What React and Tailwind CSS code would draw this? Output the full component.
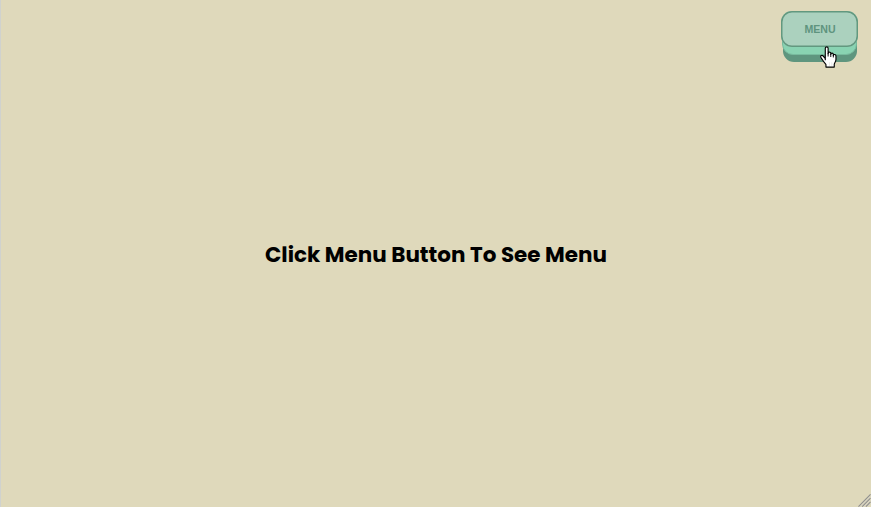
function HandCursor() {
  return (
    <svg
      className="pointer-events-none absolute left-[38.5px] top-[35px] h-[22px] w-[17px]"
      viewBox="0 0 18 23"
      fill="none"
      aria-hidden="true"
    >
      <path
        d="M5.6 15V2.2C5.6.3 8.6.3 8.6 2.2V8C8.6 5.8 11.4 5.8 11.4 7.8V8.8C11.4 7 14.1 7 14.1 8.8V10C14.1 8.3 16.9 8.5 16.9 10.4V14.2C16.9 16.6 15.1 17.7 15.1 19.3V22.2H6.3V19.5C5.1 18 3.3 15.8 2.2 13.9L.9 11.7C.2 10.2 2.2 9.1 3.4 10.5L5.6 13.2"
        fill="white"
        stroke="black"
        strokeWidth="1.2"
        strokeLinejoin="round"
      />
      <path d="M8.6 7.5V11M11.4 8.5V11.5M14.1 9.5V12" stroke="black" strokeWidth="1" />
      <path d="M10 17V21M12.5 17V21" stroke="#dedede" strokeWidth="0.7" />
    </svg>
  );
}

function MenuButton() {
  return (
    <div className="relative h-[51px] w-[77px]">
      <div className="absolute inset-x-[1.5px] bottom-0 h-[36px] rounded-[11px] bg-[#5f967f]" />
      <div className="absolute inset-x-[1px] bottom-[7px] h-[36px] rounded-[11px] border border-[#78bb9e] bg-[#89d3b2]" />
      <button className="relative flex h-[36px] w-full items-center justify-center rounded-[11px] bg-[#abd1be] pl-px font-['Liberation_Sans',sans-serif] text-[10.6px] font-bold leading-none text-[#5f947e] shadow-[inset_0_0_0_1.5px_#62987f]">
        MENU
      </button>
      <HandCursor />
    </div>
  );
}

function ResizeGrip() {
  return (
    <svg className="absolute bottom-0 right-0 h-[13px] w-[13px]" viewBox="0 0 14 14" aria-hidden="true">
      <path d="M0.5 13.5L13.5 0.5M4.5 13.5L13.5 4.5M8.5 13.5L13.5 8.5" stroke="#8f8f8f" strokeWidth="1.2" />
      <path d="M2.5 13.5L13.5 2.5M6.5 13.5L13.5 6.5M10.5 13.5L13.5 10.5" stroke="#d4d1c5" strokeWidth="1" />
    </svg>
  );
}

export default function App() {
  return (
    <main className="relative flex h-screen flex-col overflow-hidden border-l border-[#d0d2ce] bg-[#dfd9bb]">
      <header className="flex h-[62px] shrink-0 justify-end pr-[13px] pt-[11px]">
        <MenuButton />
      </header>
      <section className="flex flex-1 justify-center pt-[177px]">
        <h1 className="h-8 whitespace-nowrap font-[Poppins,Inter,sans-serif] text-[21.47px] font-bold leading-8 text-black">
          Click Menu Button To See Menu
        </h1>
      </section>
      <ResizeGrip />
    </main>
  );
}
